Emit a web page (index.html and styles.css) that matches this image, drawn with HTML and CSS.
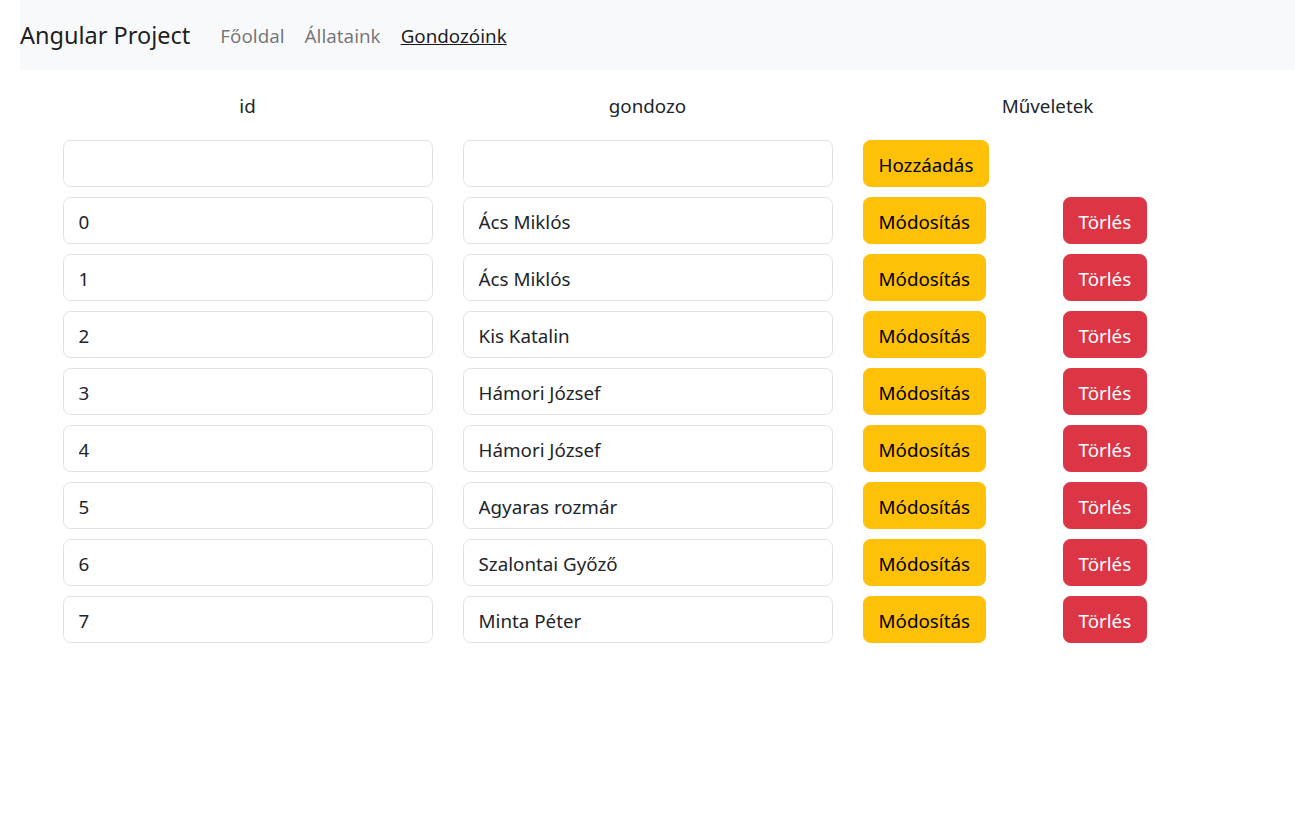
FILE: index.html
```html
<!DOCTYPE html>
<html lang="hu">
<head>
<meta charset="utf-8">
<title>Angular Project</title>
<link rel="stylesheet" href="styles.css">
</head>
<body>
<nav class="navbar">
  <a class="brand" href="#">Angular Project</a>
  <ul class="nav">
    <li><a class="nav-link" href="#">Főoldal</a></li>
    <li><a class="nav-link" href="#">Állataink</a></li>
    <li><a class="nav-link active" href="#">Gondozóink</a></li>
  </ul>
</nav>
<table class="grid">
  <colgroup>
    <col class="c-wide"><col class="c-wide"><col class="c-narrow"><col class="c-narrow">
  </colgroup>
  <thead>
    <tr><th>id</th><th>gondozo</th><th colspan="2">Műveletek</th></tr>
  </thead>
  <tbody>
    <tr>
      <td><input class="form-control" type="text" value=""></td>
      <td><input class="form-control" type="text" value=""></td>
      <td><button class="btn btn-warning">Hozzáadás</button></td>
      <td></td>
    </tr>
    <tr><td><input class="form-control" value="0"></td><td><input class="form-control" value="Ács Miklós"></td><td><button class="btn btn-warning">Módosítás</button></td><td><button class="btn btn-danger">Törlés</button></td></tr>
    <tr><td><input class="form-control" value="1"></td><td><input class="form-control" value="Ács Miklós"></td><td><button class="btn btn-warning">Módosítás</button></td><td><button class="btn btn-danger">Törlés</button></td></tr>
    <tr><td><input class="form-control" value="2"></td><td><input class="form-control" value="Kis Katalin"></td><td><button class="btn btn-warning">Módosítás</button></td><td><button class="btn btn-danger">Törlés</button></td></tr>
    <tr><td><input class="form-control" value="3"></td><td><input class="form-control" value="Hámori József"></td><td><button class="btn btn-warning">Módosítás</button></td><td><button class="btn btn-danger">Törlés</button></td></tr>
    <tr><td><input class="form-control" value="4"></td><td><input class="form-control" value="Hámori József"></td><td><button class="btn btn-warning">Módosítás</button></td><td><button class="btn btn-danger">Törlés</button></td></tr>
    <tr><td><input class="form-control" value="5"></td><td><input class="form-control" value="Agyaras rozmár"></td><td><button class="btn btn-warning">Módosítás</button></td><td><button class="btn btn-danger">Törlés</button></td></tr>
    <tr><td><input class="form-control" value="6"></td><td><input class="form-control" value="Szalontai Győző"></td><td><button class="btn btn-warning">Módosítás</button></td><td><button class="btn btn-danger">Törlés</button></td></tr>
    <tr><td><input class="form-control" value="7"></td><td><input class="form-control" value="Minta Péter"></td><td><button class="btn btn-warning">Módosítás</button></td><td><button class="btn btn-danger">Törlés</button></td></tr>
  </tbody>
</table>
</body>
</html>
```

FILE: styles.css
```css
* { box-sizing: border-box; }
html, body { margin: 0; padding: 0; }
body {
  font-family: "Noto Sans", "Open Sans", sans-serif;
  font-size: 18.8px;
  line-height: 30px;
  color: #212529;
  background: #fff;
}
.navbar {
  margin-left: 20px;
  background: #f8f9fa;
  padding: 10px 0;
  display: flex;
  align-items: center;
}
.brand {
  font-size: 23.5px;
  line-height: 37.5px;
  padding: 7px 0 5.5px;
  margin-right: 20px;
  color: rgba(0,0,0,.9);
  text-decoration: none;
}
.nav {
  display: flex;
  list-style: none;
  margin: 0;
  padding: 0;
}
.nav-link {
  display: block;
  padding: 11px 10px 9px;
  line-height: 30px;
  color: rgba(0,0,0,.55);
  text-decoration: none;
}
.nav-link.active {
  color: rgba(0,0,0,.9);
  text-decoration: underline;
}
.grid {
  width: 1200px;
  margin: 0 auto;
  table-layout: fixed;
  border-collapse: collapse;
}
.c-wide { width: 400px; }
.c-narrow { width: 200px; }
.grid th {
  font-weight: normal;
  text-align: center;
  padding: 21px 15px 14px;
  line-height: 30px;
}
.grid td {
  padding: 5px 15px;
  vertical-align: middle;
}
.form-control {
  display: block;
  width: 100%;
  height: 47px;
  padding: 8.5px 15px 6.5px;
  font: inherit;
  line-height: 30px;
  color: #212529;
  background: #fff;
  border: 1px solid #dee2e6;
  border-radius: 7.5px;
  outline: none;
}
.btn {
  display: inline-block;
  height: 47px;
  font: inherit;
  line-height: 30px;
  padding: 8.5px 15px 6.5px;
  border: 1px solid transparent;
  border-radius: 7.5px;
  cursor: pointer;
}
.btn-warning { background: #ffc107; border-color: #ffc107; color: #000; }
.btn-danger { background: #dc3545; border-color: #dc3545; color: #fff; }
```
